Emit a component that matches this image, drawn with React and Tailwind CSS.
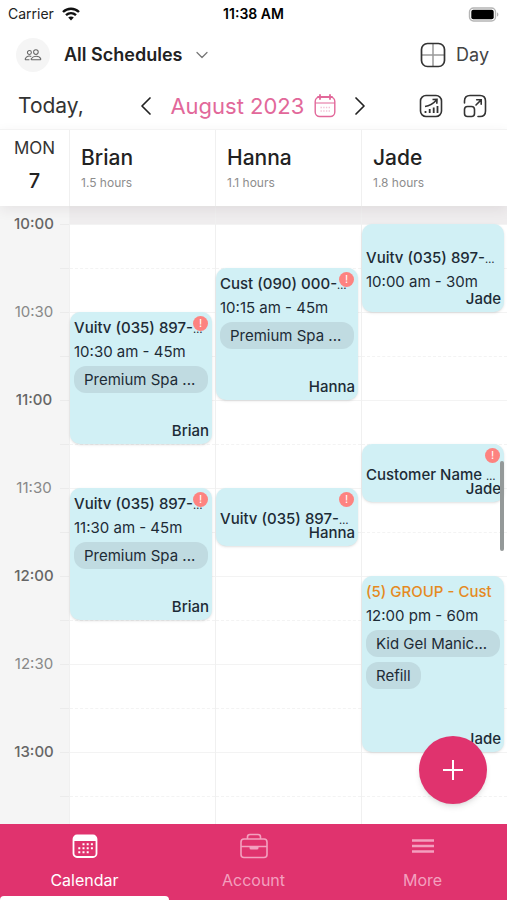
import React, { useState } from 'react';
import { ChevronDown } from 'lucide-react';

const staff = [
  {
    name: 'Brian',
    hours: '1.5 hours',
    events: [
      { title: 'Vuitv (035) 897-', time: '10:30 am - 45m', services: ['Premium Spa ...'], slot: 'row-start-3 row-span-3', alert: true, cut: true },
      { title: 'Vuitv (035) 897-', time: '11:30 am - 45m', services: ['Premium Spa ...'], slot: 'row-start-7 row-span-3', alert: true, cut: true },
    ],
  },
  {
    name: 'Hanna',
    hours: '1.1 hours',
    events: [
      { title: 'Cust (090) 000-', time: '10:15 am - 45m', services: ['Premium Spa ...'], slot: 'row-start-2 row-span-3', alert: true, cut: true },
      { title: 'Vuitv (035) 897-', slot: 'row-start-7 h-[58px]', alert: true, cut: true, pad: 'pt-[19px]' },
    ],
  },
  {
    name: 'Jade',
    hours: '1.8 hours',
    events: [
      { title: 'Vuitv (035) 897-', time: '10:00 am - 30m', slot: 'row-start-1 row-span-2', cut: true, pad: 'pt-[22px]' },
      { title: 'Customer Name ', slot: 'row-start-6 h-[58px]', alert: true, cut: true, pad: 'pt-[19px]' },
      { title: '(5) GROUP - Cust', time: '12:00 pm - 60m', services: ['Kid Gel Manic...', 'Refill'], slot: 'row-start-9 row-span-4', group: true },
    ],
  },
];

const times = ['10:00', '10:30', '11:00', '11:30', '12:00', '12:30', '13:00'];
const quarters = Array.from({ length: 14 }, (_, i) => i);

function WifiIcon() {
  return (
    <svg width="18" height="14" viewBox="0 0 18 14" fill="none" stroke="#111" strokeWidth="2.4">
      <path d="M1 5C5.5 .6 12.500 .6 17 5" />
      <path d="M4 8.200C6.900 5.500 11.100 5.500 14 8.200" />
      <path d="M9 13.500L6.200 10.600C7.800 9.200 10.200 9.200 11.800 10.600Z" fill="#111" stroke="none" />
    </svg>
  );
}

function BatteryIcon() {
  return (
    <svg width="31" height="15" viewBox="0 0 31 15">
      <rect x="1.500" y="1" width="26" height="13" rx="4" fill="#fff" stroke="#b5b5b5" strokeWidth="1.4" />
      <rect x="3.300" y="2.800" width="22.400" height="9.400" rx="2" fill="#000" />
      <path d="M29 5.500C30.800 6 30.800 9 29 9.500Z" fill="#b5b5b5" />
    </svg>
  );
}

function PeopleIcon() {
  return (
    <svg width="18" height="12" viewBox="0 0 20 14" fill="none" stroke="#666" strokeWidth="1.200">
      <circle cx="5.800" cy="4" r="2.300" />
      <circle cx="13.400" cy="3.600" r="2.700" />
      <path d="M8.300 12.500H18.200C19 12.500 19.300 12 19 11.300C17.300 7.600 10.500 7.300 8 11.300C7.600 12 7.800 12.500 8.300 12.500Z" />
      <path d="M8 8.800C5.600 7.600 2.400 8.500 1 11.300C.7 12 1 12.500 1.700 12.500H5.800" />
    </svg>
  );
}

function GridIcon() {
  return (
    <svg width="26" height="26" viewBox="0 0 26 26" fill="none">
      <path d="M13 2V24M2 13H24" stroke="#999" strokeWidth="1.500" />
      <rect x="1.500" y="1.500" width="23" height="23" rx="6" stroke="#333" strokeWidth="1.700" />
    </svg>
  );
}

function ArrowIcon({ d }) {
  return (
    <svg width="12" height="20" viewBox="0 0 12 20" fill="none" stroke="#222" strokeWidth="1.700" strokeLinecap="round" strokeLinejoin="round">
      <path d={d} />
    </svg>
  );
}

function DateIcon() {
  return (
    <svg width="22" height="24" viewBox="0 0 22 24" fill="none" stroke="#e2689a" strokeWidth="1.400">
      <rect x="1.200" y="3" width="19.600" height="19.500" rx="4.500" />
      <path d="M1.200 9H20.800" strokeWidth="1" />
      <path d="M6 1V5M16 1V5M4 3H18" strokeWidth="1.800" strokeLinecap="round" />
      <path d="M6.500 13.500H16M6.500 17H16" strokeDasharray="1.400 1.300" strokeWidth="1.500" opacity=".4" />
    </svg>
  );
}

function ReportIcon() {
  return (
    <svg width="24" height="24" viewBox="0 0 24 24" fill="none" stroke="#333" strokeWidth="1.600">
      <rect x="1.500" y="1.500" width="21" height="21" rx="5.500" />
      <path d="M6.500 19V17M10.700 19V15M14.700 19V13.500M18.500 19V12" strokeWidth="1.800" />
      <path d="M6 12.500C10.500 12 14 10 17.500 6M13.500 5.500L18 5.300L17.800 9.800" />
    </svg>
  );
}

function ExpandIcon() {
  return (
    <svg width="24" height="24" viewBox="0 0 24 24" fill="none" stroke="#333" strokeWidth="1.600" strokeLinecap="round">
      <rect x="1.500" y="12.500" width="10" height="10" rx="3" />
      <path d="M1.500 9V7C1.500 3.500 3.500 1.500 7 1.500H17C20.500 1.500 22.500 3.500 22.500 7V17C22.500 20.500 20.500 22.500 17 22.500H15" />
      <path d="M13 11L18 6M13.700 5.800H18.200V10.300" />
    </svg>
  );
}

function PlusIcon() {
  return (
    <svg width="22" height="22" viewBox="0 0 22 22" stroke="currentColor" strokeWidth="2">
      <path d="M11 1V21M1 11H21" />
    </svg>
  );
}

function CalendarTabIcon() {
  return (
    <svg width="26" height="24" viewBox="0 0 26 24" fill="none">
      <rect x="1.500" y="1.500" width="23" height="21.500" rx="3.500" stroke="currentColor" strokeWidth="1.800" />
      <path d="M1.500 7V4.500Q1.500 1.500 4.500 1.500H21.500Q24.500 1.500 24.500 4.500V7Z" fill="currentColor" />
      <path d="M10.500 10.200H21M6.300 14.200H21M6.300 18.200H17" stroke="currentColor" strokeWidth="2" strokeDasharray="2 2.200" />
    </svg>
  );
}

function BriefcaseIcon() {
  return (
    <svg width="28" height="26" viewBox="0 0 28 26" fill="none" stroke="currentColor" strokeWidth="1.600">
      <rect x="1" y="6" width="26" height="18.500" rx="3" />
      <path d="M7.500 6V4Q7.500 1.500 10 1.500H18Q20.500 1.500 20.500 4V6M1 13.500H27" />
      <path d="M9.500 14H18.500V15Q18.500 16.500 17 16.500H11Q9.500 16.500 9.500 15Z" fill="currentColor" stroke="none" />
    </svg>
  );
}

function MenuIcon() {
  return (
    <svg width="22" height="16" viewBox="0 0 22 16" stroke="currentColor" strokeWidth="2.400">
      <path d="M0 2.500H22M0 8H22M0 13.500H22" />
    </svg>
  );
}

const tabs = [
  { name: 'Calendar', icon: CalendarTabIcon },
  { name: 'Account', icon: BriefcaseIcon },
  { name: 'More', icon: MenuIcon },
];

function EventCard({ event, owner }) {
  return (
    <article
      className={`relative mr-[3px] rounded-[10px] bg-[#d1f0f5] px-1 text-[15px] leading-6 whitespace-nowrap text-[#1d2b36] shadow-sm ${event.slot} ${event.pad || 'pt-1'}`}
    >
      <h3 className={`font-medium ${event.group ? 'text-[#e58a1f]' : ''}`}>
        {event.title}
        {event.cut && <span className="text-[11px] leading-none font-normal">…</span>}
      </h3>
      {event.time && <p>{event.time}</p>}
      {event.services && (
        <ul className="mt-[2px] flex flex-col items-start gap-[5px]">
          {event.services.map((service, i) => (
            <li key={service} className={`rounded-xl bg-[#c0dbe1] px-[10px] leading-[27px] ${i === 0 ? 'w-full' : ''}`}>
              {service}
            </li>
          ))}
        </ul>
      )}
      <span className="absolute right-[3px] bottom-[3px] leading-5 font-medium">{owner}</span>
      {event.alert && (
        <span className="absolute top-1 right-1 size-[15px] rounded-full bg-[#fd8380] text-center text-[11px] leading-[15px] text-white">!</span>
      )}
    </article>
  );
}

export default function App() {
  const [tab, setTab] = useState('Calendar');

  return (
    <div className="flex h-screen flex-col overflow-hidden bg-white font-['Inter','Liberation_Sans',sans-serif] text-[#222]">
      {/* Status bar */}
      <div className="grid h-7 shrink-0 grid-cols-3 items-center px-2 text-sm">
        <div className="flex items-center gap-2">
          <span>Carrier</span>
          <WifiIcon />
        </div>
        <span className="text-center font-semibold text-black">11:38 AM</span>
        <div className="flex justify-end">
          <BatteryIcon />
        </div>
      </div>

      <header className="shrink-0">
        <div className="flex h-[54px] items-center justify-between pr-[18px] pl-4">
          <button className="flex items-center text-lg font-semibold">
            <span className="mr-[14px] flex size-[34px] items-center justify-center rounded-full bg-[#f5f5f5]">
              <PeopleIcon />
            </span>
            All Schedules
            <ChevronDown className="ml-[10px] size-5 text-[#777]" strokeWidth={1.5} />
          </button>
          <button className="flex items-center gap-[10px] text-lg text-[#444]">
            <GridIcon />
            Day
          </button>
        </div>
        <div className="flex h-[47px] items-center justify-between pr-5 pl-[18px]">
          <button className="text-[21px] text-[#333]">Today,</button>
          <div className="ml-1 flex items-center gap-[18px]">
            <button aria-label="Previous day">
              <ArrowIcon d="M10 2L2 10L10 18" />
            </button>
            <button className="flex items-center gap-[10px] text-[22px] leading-7 text-[#e2689a]">
              August 2023
              <DateIcon />
            </button>
            <button aria-label="Next day">
              <ArrowIcon d="M2 2L10 10L2 18" />
            </button>
          </div>
          <div className="flex items-center gap-5">
            <button aria-label="Reports"><ReportIcon /></button>
            <button aria-label="Full screen"><ExpandIcon /></button>
          </div>
        </div>
      </header>

      {/* Staff row */}
      <div className="z-10 flex h-[77px] shrink-0 border-t border-[#f3f3f3] bg-white shadow-[0_4px_12px_rgba(60,40,50,0.08)]">
        <div className="flex w-[69px] flex-col items-center gap-[5px] pt-1">
          <span className="text-[17px] leading-7 text-[#333]">MON</span>
          <span className="text-xl leading-7 font-medium">7</span>
        </div>
        {staff.map((person) => (
          <div key={person.name} className="flex-1 border-l border-[#f0f0f0] pt-[14px] pl-[11px]">
            <h2 className="text-[21px] leading-7 font-medium">{person.name}</h2>
            <p className="text-xs leading-[22px] text-[#8d8d8d]">{person.hours}</p>
          </div>
        ))}
      </div>

      {/* Timeline */}
      <main className="relative flex min-h-0 flex-1 overflow-hidden">
        <div className="flex w-[69px] bg-[#f5f5f5]">
          <div className="w-[60px] pl-2 text-center text-[15px] leading-9">
            {times.map((time) => (
              <div key={time} className={`h-[88px] ${time.endsWith(':00') ? 'font-medium text-[#666]' : 'text-[#888]'}`}>
                {time}
              </div>
            ))}
          </div>
          <div className="flex-1 pt-[18px]">
            {quarters.map((q) => (
              <div key={q} className="h-11 border-t border-[#ebebeb]" />
            ))}
          </div>
        </div>
        {staff.map((person) => (
          <div key={person.name} className="flex-1 border-l border-[#f0f0f0]">
            <div className="h-[18px] bg-[#efedee]" />
            <div className="grid">
              <div className="col-start-1 row-start-1">
                {quarters.map((q) => (
                  <div key={q} className={`h-11 border-t border-[#f3f3f3] ${q % 2 ? 'border-dashed' : ''}`} />
                ))}
              </div>
              <div className="col-start-1 row-start-1 grid auto-rows-[44px] grid-cols-1">
                {person.events.map((event) => (
                  <EventCard key={event.slot} event={event} owner={person.name} />
                ))}
              </div>
            </div>
          </div>
        ))}
        <div className="absolute top-[255px] right-[3px] h-[90px] w-1 rounded-full bg-[#949999]" />
        <button
          aria-label="Add appointment"
          className="absolute right-5 bottom-5 flex size-[68px] items-center justify-center rounded-full bg-[#e0336e] text-white shadow-md"
        >
          <PlusIcon />
        </button>
      </main>

      <nav className="grid h-[76px] shrink-0 grid-cols-3 bg-[#e0336e] text-base">
        {tabs.map(({ name, icon: Icon }) => (
          <button
            key={name}
            onClick={() => setTab(name)}
            className={`flex flex-col items-center pt-2 ${tab === name ? 'text-white' : 'text-[#f3a0bf]'}`}
          >
            <span className="flex h-7 items-center"><Icon /></span>
            <span className="mt-2 leading-6">{name}</span>
            <span className={`mt-1 h-1 w-full rounded-t-sm ${tab === name ? 'bg-white' : ''}`} />
          </button>
        ))}
      </nav>
    </div>
  );
}
